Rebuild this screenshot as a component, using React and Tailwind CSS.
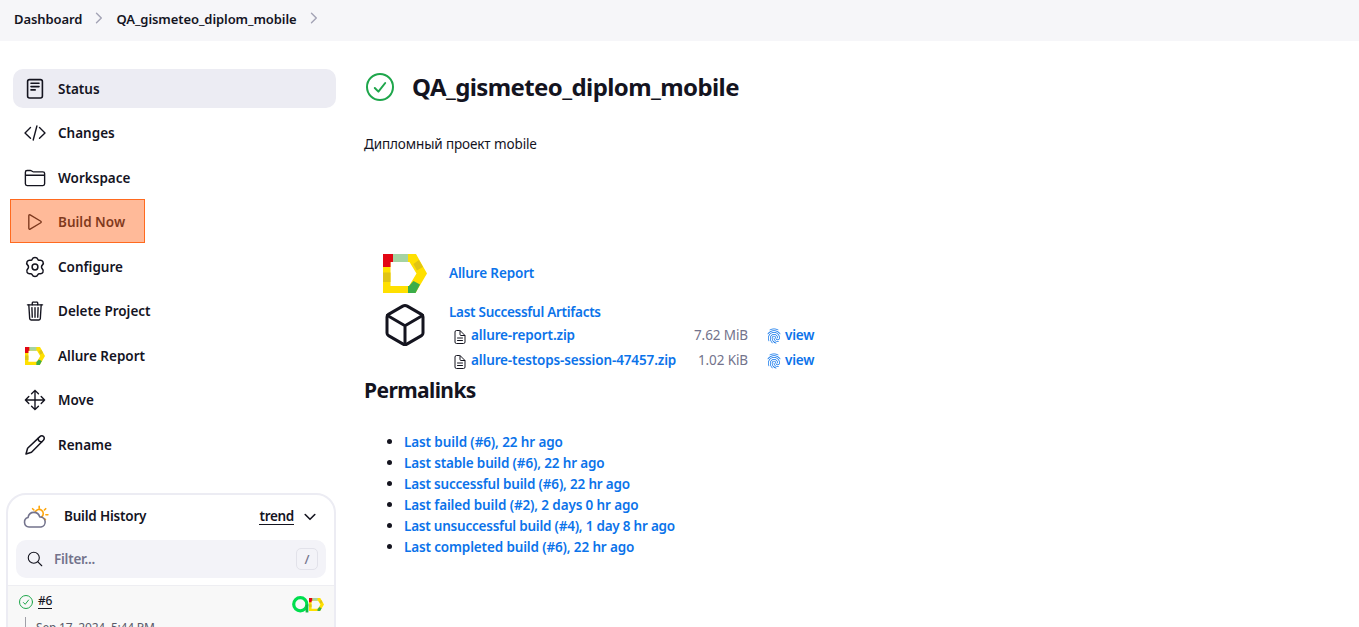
import {
  IoCubeOutline,
  IoDocumentTextOutline,
  IoFingerPrintOutline,
  IoFolderOutline,
  IoMoveOutline,
  IoPlayOutline,
  IoSearchOutline,
  IoTrashOutline,
} from "react-icons/io5";

function StatusIcon({ className }) {
  return (
    <svg viewBox="0 0 22 22" className={className} fill="none" stroke="currentColor" strokeWidth="1.6" strokeLinecap="round">
      <rect x="3.6" y="1.6" width="14.8" height="18.4" rx="2" />
      <path d="M7 5.3h8M7 8.6h8M7 11.9h4.2" />
    </svg>
  );
}

function CodeIcon({ className }) {
  return (
    <svg viewBox="0 0 22 22" className={className} fill="none" stroke="currentColor" strokeWidth="1.4" strokeLinecap="round" strokeLinejoin="round">
      <path d="M6.500 5.500L1 11l5.500 5.300M15.500 5.500L21 11l-5.500 5.300M12.900 4L9.200 18" />
    </svg>
  );
}

function GearIcon({ className }) {
  return (
    <svg viewBox="0 0 22 22" className={className} fill="none" stroke="currentColor" strokeWidth="1.500" strokeLinejoin="round">
      <circle cx="11" cy="11" r="2.900" />
      <path d="M8.200 3.300C8.700 1.900 9.700 1.400 11 1.400s2.300.5 2.800 1.900c.3.900.8 1.200 1.700 1 1.500-.3 2.700.1 3.400 1.300.7 1.200.5 2.400-.6 3.500-.6.600-.8 1.200-.8 1.900s.2 1.300.8 1.900c1.100 1.100 1.300 2.300.6 3.500-.7 1.200-1.900 1.600-3.400 1.300-.9-.2-1.400.1-1.700 1-.5 1.400-1.500 1.900-2.800 1.900s-2.300-.5-2.800-1.900c-.3-.9-.8-1.200-1.700-1-1.500.3-2.700-.1-3.400-1.300-.7-1.200-.5-2.400.6-3.500.6-.6.8-1.200.8-1.900s-.2-1.300-.8-1.900C2.600 8 2.400 6.800 3.100 5.600c.7-1.200 1.900-1.600 3.400-1.300.9.2 1.400-.1 1.700-1z" />
    </svg>
  );
}

function PencilIcon({ className }) {
  return (
    <svg viewBox="0 0 22 22" className={className} fill="none" stroke="currentColor" strokeWidth="1.5" strokeLinecap="round" strokeLinejoin="round">
      <path d="M2 20l1.6-5.8L15.9 2.6c1.1-1 2.700-1 3.600 0s.9 2.500-.1 3.600L7.500 18.300z" />
      <path d="M14 4.500c.2 2 1.500 3.300 3.600 3.500" />
    </svg>
  );
}

function AllureIcon({ className }) {
  return (
    <svg viewBox="0 0 44 39" className={className} preserveAspectRatio="none">
      <path fill="#ffe000" d="M0 0h33l11 19.500L32.500 39H0zM7.500 8v24H26l7.500-12.500L26.500 8z" fillRule="evenodd" />
      <path fill="#e30613" d="M0 0h10v8H7.500v5H0z" />
      <path fill="#a5d3a2" d="M10 0h15v8H10z" />
      <path fill="#e0c414" d="M0 18.500h7.500V28H0zM30.400 10l5.500-4 4 7-6 3.500z" />
      <path fill="#3bad49" d="M25 32h1l4.500-5 6.500 3.500-4.500 8.500H25z" />
    </svg>
  );
}

function CheckIcon({ className }) {
  return (
    <svg viewBox="0 0 28 28" className={className} fill="none" stroke="#1ea64b" strokeWidth="2" strokeLinecap="round" strokeLinejoin="round">
      <circle cx="14" cy="14" r="13" />
      <path d="M8.800 15l3.600 3.600 6.800-8.600" />
    </svg>
  );
}

function WeatherIcon({ className }) {
  return (
    <svg viewBox="0 0 26 24" className={className} fill="none" strokeWidth="1.600" strokeLinecap="round" strokeLinejoin="round">
      <g stroke="#fea60b">
        <path d="M12.300 6.700a4.200 4.200 0 1 1 6.300 5.200" />
        <path d="M16.200 1.200v2M9.600 3.700l1.300 1.300M22.700 3.700l-1.300 1.300M24.900 9.800h-2M21.400 13.600l1 1" />
      </g>
      <path stroke="#73738c" d="M6 22a4.800 4.800 0 0 1-1-9.400c.6-3.300 2.900-5.200 5.900-5.200 2.900 0 5 1.700 5.800 4.500a5.100 5.100 0 0 1 1.300 10.100z" />
    </svg>
  );
}

function Chevron({ className }) {
  return (
    <svg viewBox="0 0 8 12" className={className} fill="none" stroke="#a3a3b5" strokeWidth="1.400" strokeLinecap="round" strokeLinejoin="round">
      <path d="M1.500 1.200L6.300 6l-4.800 4.800" />
    </svg>
  );
}

const tasks = [
  { label: "Status", Icon: StatusIcon, active: true },
  { label: "Changes", Icon: CodeIcon },
  { label: "Workspace", Icon: IoFolderOutline },
  { label: "Build Now", Icon: IoPlayOutline, marked: true },
  { label: "Configure", Icon: GearIcon },
  { label: "Delete Project", Icon: IoTrashOutline },
  { label: "Allure Report", Icon: AllureIcon, inset: true },
  { label: "Move", Icon: IoMoveOutline },
  { label: "Rename", Icon: PencilIcon },
];

const artifacts = [
  { name: "allure-report.zip", size: "7.62 MiB" },
  { name: "allure-testops-session-47457.zip", size: "1.02 KiB" },
];

const permalinks = [
  { text: "Last build (#6), 22 hr ago", tracking: "tracking-[-0.110px]" },
  { text: "Last stable build (#6), 22 hr ago", tracking: "tracking-[-0.150px]" },
  { text: "Last successful build (#6), 22 hr ago", tracking: "tracking-[-0.180px]" },
  { text: "Last failed build (#2), 2 days 0 hr ago", tracking: "tracking-[-0.130px]" },
  { text: "Last unsuccessful build (#4), 1 day 8 hr ago", tracking: "tracking-[-0.220px]" },
  { text: "Last completed build (#6), 22 hr ago", tracking: "tracking-[-0.140px]" },
];

function BuildHistory() {
  return (
    <section className="ml-[6px] mt-[29px] h-[220px] w-[330px] shrink-0 rounded-[20px] border-2 border-[#ececf3] bg-white">
      <div className="flex h-[44px] items-center pb-[2px] pl-[15px] pr-[18px]">
        <WeatherIcon className="mt-[2px] h-6 w-[26px]" />
        <span className="ml-[15px] tracking-[-0.200px]">Build History</span>
        <span className="ml-auto border-b border-[#14141f] leading-[16px] tracking-[-0.300px]">trend</span>
        <svg viewBox="0 0 12 8" className="ml-[10px] mt-[2px] h-2 w-3" fill="none" stroke="currentColor" strokeWidth="1.600" strokeLinecap="round" strokeLinejoin="round">
          <path d="M1.200 1.500L6 6.300l4.800-4.800" />
        </svg>
      </div>
      <div className="ml-2 mr-2 mt-px flex h-[38px] items-center rounded-[10px] bg-[#f3f3f8] pl-[10px] pr-2">
        <IoSearchOutline className="size-[18px]" />
        <span className="ml-[10px] tracking-[-0.250px] text-[#73738c]">Filter...</span>
        <span className="ml-auto flex h-[22px] w-[22px] items-center justify-center rounded-[5px] border border-[#e2e2ea] text-[13px] font-medium text-[#73738c]">/</span>
      </div>
      <div className="mt-[7px] h-[125px] border-t border-[#eeeeF2] bg-[#f8f8f8] pl-[11px] pr-[10px]">
        <div className="flex h-[31px] items-center">
          <CheckIcon className="size-[14px]" />
          <span className="ml-[5px] border-b border-[#14141f] text-[12px] font-medium leading-[14px] tracking-[-0.200px]">#6</span>
          <svg viewBox="0 0 16 16" className="ml-auto mt-[5px] size-[17px]" fill="none">
            <circle cx="7.800" cy="7.800" r="6.200" stroke="#00de4e" strokeWidth="3" />
            <path d="M14.100 8v7.500" stroke="#0fb946" strokeWidth="2.600" />
          </svg>
          <AllureIcon className="mt-[5px] h-[13px] w-[15px]" />
        </div>
        <div className="ml-[6px] flex border-l border-[#a0a0a8] pl-[10px] text-[12px] font-normal leading-[22px] tracking-[-0.200px] text-[#5b5b6a]">Sep 17, 2024, 5:44 PM</div>
      </div>
    </section>
  );
}

export default function App() {
  return (
    <div className="flex h-[627px] w-[1359px] flex-col overflow-hidden bg-white font-['Noto_Sans','Open_Sans',sans-serif] text-[13.500px] font-semibold leading-[21px] text-[#14141f]">
      <header className="flex h-[41px] shrink-0 items-center bg-[#f6f6f9] pb-[3px] pl-[14px] text-[13px] tracking-[-0.080px]">
        <span>Dashboard</span>
        <Chevron className="-mt-[2px] ml-[13px] h-3 w-2" />
        <span className="ml-[13px]">QA_gismeteo_diplom_mobile</span>
        <Chevron className="-mt-[2px] ml-[13px] h-3 w-2" />
      </header>
      <div className="flex min-h-0 flex-1">
        <aside className="flex w-[336px] shrink-0 flex-col pt-[28px]">
          <nav className="ml-[13px] flex flex-col gap-[5.550px]">
            {tasks.map(({ label, Icon, active, marked, inset }) => (
              <a key={label} className={"relative flex h-[39px] shrink-0 items-center rounded-[10px] pl-[11px] " + (active ? "bg-[#ececf3]" : "")}>
                <Icon className={"size-[22px] shrink-0 " + (inset ? "px-px py-[2px]" : "")} />
                <span className="ml-3 mt-px">{label}</span>
                {marked && <span className="absolute -left-[3px] -top-[4px] h-[44px] w-[135px] border border-[#ff6a1f] bg-[#ff661c]/45" />}
              </a>
            ))}
          </nav>
          <BuildHistory />
        </aside>
        <main className="ml-[28px] flex flex-1 flex-col pt-[31px]">
          <div className="flex h-[30px] items-center">
            <CheckIcon className="ml-[2px] size-[28px]" />
            <h1 className="ml-[18px] text-[24px] font-bold leading-[30px] tracking-[-0.600px]">QA_gismeteo_diplom_mobile</h1>
          </div>
          <p className="mt-[32px] font-normal tracking-[-0.120px]">Дипломный проект mobile</p>
          <div className="mt-[98px] flex h-[40px] items-center">
            <AllureIcon className="ml-[19px] mt-px h-[39px] w-[44px]" />
            <a className="ml-[22px] tracking-[-0.140px] text-[#0b73ea]">Allure Report</a>
          </div>
          <div className="mt-[8px] flex h-[72px]">
            <IoCubeOutline className="ml-[17px] mt-0 size-[48px] shrink-0" />
            <div className="ml-[20px] mt-px flex flex-col text-[#0b73ea]">
              <a className="h-[21px] tracking-[-0.280px]">Last Successful Artifacts</a>
              {artifacts.map(({ name, size }) => (
                <div key={name} className="flex h-[25px] items-center">
                  <IoDocumentTextOutline className="ml-[3px] mt-[3px] size-4 text-[#14141f]" />
                  <a className="ml-[3px] w-[206px] whitespace-nowrap tracking-[-0.130px]">{name}</a>
                  <span className="w-[71px] text-right font-normal tracking-[-0.100px] text-[#73738c]">{size}</span>
                  <IoFingerPrintOutline className="ml-[18px] size-4" />
                  <a className="ml-[3px] tracking-[-0.200px]">view</a>
                </div>
              ))}
            </div>
          </div>
          <h2 className="mt-[3px] text-[21px] font-bold leading-[28px] tracking-[-0.600px]">Permalinks</h2>
          <ul className="mt-[27px] text-[#0b73ea]">
            {permalinks.map(({ text, tracking }) => (
              <li key={text} className="flex h-[21px] items-center">
                <span className="ml-[23px] mr-[12px] size-[5px] rounded-full bg-[#14141f]" />
                <a className={"mt-[2px] " + tracking}>{text}</a>
              </li>
            ))}
          </ul>
        </main>
      </div>
    </div>
  );
}
